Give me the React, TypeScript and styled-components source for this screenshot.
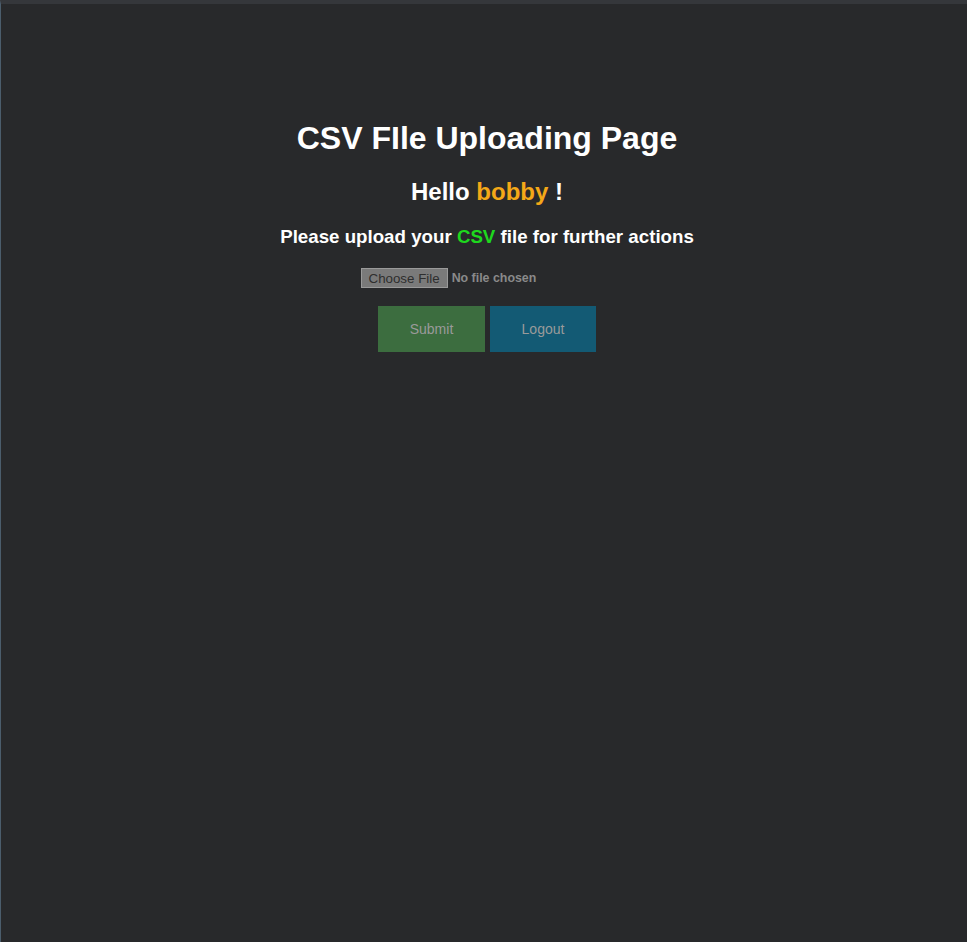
import React from "react";
import styled, { createGlobalStyle } from "styled-components";

const Global = createGlobalStyle`
  html, body { margin: 0; padding: 0; background: #28292b; }
  body { font-family: "Liberation Sans", Arial, sans-serif; }
`;

const Page = styled.div`
  min-height: 942px;
  box-sizing: border-box;
  border-top: 4px solid #35373b;
  border-left: 1px solid #4b5d6c;
  background: #28292b;
  padding: 0 0 0 6px;
`;

const Main = styled.main`
  display: flex;
  flex-direction: column;
  align-items: center;
  padding-top: 116px;
  color: #ffffff;
`;

const Title = styled.h1`
  margin: 0;
  font-size: 32px;
  font-weight: bold;
  line-height: 37px;
`;

const Hello = styled.h2`
  margin: 21px 0 0;
  font-size: 24px;
  font-weight: bold;
  line-height: 28px;
`;

const Note = styled.h3`
  margin: 20px 0 0;
  font-size: 18.72px;
  font-weight: bold;
  line-height: 22px;
`;

const Accent = styled.span<{ $color: string }>`
  color: ${(p) => p.$color};
`;

const Form = styled.form`
  display: flex;
  flex-direction: column;
  align-items: center;
  margin-top: 20px;
`;

const FileRow = styled.label`
  display: flex;
  align-items: center;
  width: 253px;
  gap: 4px;
  font-size: 12.4px;
  font-weight: bold;
  color: #8a8a8a;
`;

const FileButton = styled.span`
  box-sizing: border-box;
  height: 20px;
  padding: 0 7px;
  display: flex;
  align-items: center;
  background: #7a7a7a;
  border: 1px solid #9a9a9a;
  color: #2e2e2e;
  font-weight: normal;
  font-size: 13.33px;
`;

const HiddenInput = styled.input`
  display: none;
`;

const Buttons = styled.div`
  display: flex;
  gap: 5px;
  margin-top: 18px;
`;

const Btn = styled.button<{ $bg: string; $w: number }>`
  width: ${(p) => p.$w}px;
  height: 46px;
  border: none;
  background: ${(p) => p.$bg};
  color: #9a9a9a;
  font-family: "Liberation Sans", Arial, sans-serif;
  font-size: 14px;
  cursor: pointer;
`;

export default function App() {
  return (
    <>
      <Global />
      <Page>
        <Main>
          <Title>CSV FIle Uploading Page</Title>
          <Hello>
            Hello <Accent $color="#f4a818">bobby</Accent> !
          </Hello>
          <Note>
            Please upload your <Accent $color="#1ed81e">CSV</Accent> file for further actions
          </Note>
          <Form onSubmit={(e) => e.preventDefault()}>
            <FileRow>
              <FileButton>Choose File</FileButton>
              No file chosen
              <HiddenInput type="file" accept=".csv" />
            </FileRow>
            <Buttons>
              <Btn type="submit" $bg="#3c6d3f" $w={107}>Submit</Btn>
              <Btn type="button" $bg="#135a74" $w={106}>Logout</Btn>
            </Buttons>
          </Form>
        </Main>
      </Page>
    </>
  );
}
